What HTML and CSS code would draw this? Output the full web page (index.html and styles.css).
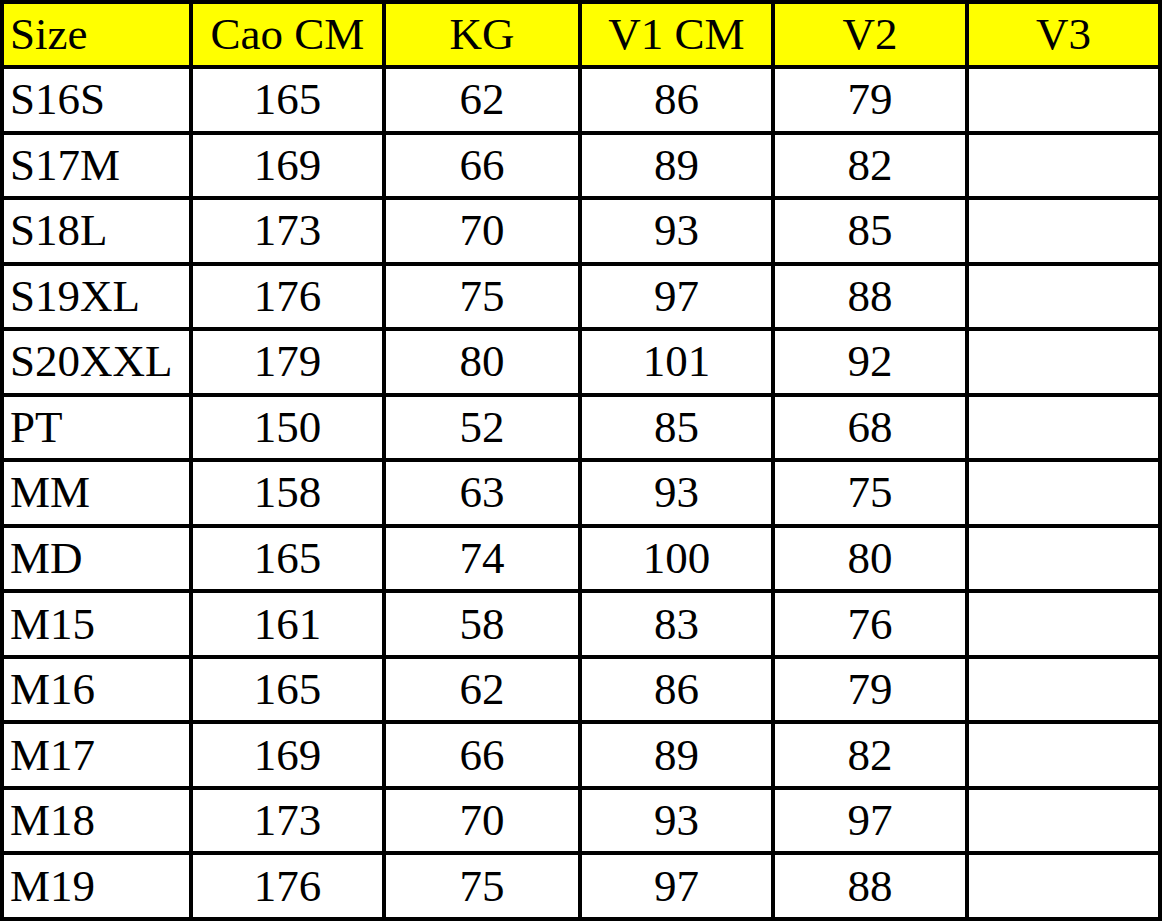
FILE: index.html
```html
<!DOCTYPE html>
<html lang="vi">
<head>
<meta charset="utf-8">
<title>Size</title>
<link rel="stylesheet" href="styles.css">
</head>
<body>
<table class="size-table">
  <colgroup>
    <col class="c1"><col class="c2"><col class="c3"><col class="c4"><col class="c5"><col class="c6">
  </colgroup>
  <thead>
    <tr><th class="name">Size</th><th>Cao CM</th><th>KG</th><th>V1 CM</th><th>V2</th><th>V3</th></tr>
  </thead>
  <tbody>
    <tr><td class="name">S16S</td><td>165</td><td>62</td><td>86</td><td>79</td><td></td></tr>
    <tr><td class="name">S17M</td><td>169</td><td>66</td><td>89</td><td>82</td><td></td></tr>
    <tr><td class="name">S18L</td><td>173</td><td>70</td><td>93</td><td>85</td><td></td></tr>
    <tr><td class="name">S19XL</td><td>176</td><td>75</td><td>97</td><td>88</td><td></td></tr>
    <tr><td class="name">S20XXL</td><td>179</td><td>80</td><td>101</td><td>92</td><td></td></tr>
    <tr><td class="name">PT</td><td>150</td><td>52</td><td>85</td><td>68</td><td></td></tr>
    <tr><td class="name">MM</td><td>158</td><td>63</td><td>93</td><td>75</td><td></td></tr>
    <tr><td class="name">MD</td><td>165</td><td>74</td><td>100</td><td>80</td><td></td></tr>
    <tr><td class="name">M15</td><td>161</td><td>58</td><td>83</td><td>76</td><td></td></tr>
    <tr><td class="name">M16</td><td>165</td><td>62</td><td>86</td><td>79</td><td></td></tr>
    <tr><td class="name">M17</td><td>169</td><td>66</td><td>89</td><td>82</td><td></td></tr>
    <tr><td class="name">M18</td><td>173</td><td>70</td><td>93</td><td>97</td><td></td></tr>
    <tr><td class="name">M19</td><td>176</td><td>75</td><td>97</td><td>88</td><td></td></tr>
  </tbody>
</table>
</body>
</html>
```
FILE: styles.css
```css
html, body {
  margin: 0;
  padding: 0;
  background: #ffffff;
}

.size-table {
  width: 1162px;
  height: 921px;
  table-layout: fixed;
  border-collapse: separate;
  border-spacing: 4px;
  background: #000000;
  font-family: "Liberation Serif", "Times New Roman", serif;
  font-size: 45px;
  color: #000000;
}

.c1 { width: 185px; }
.c2 { width: 189px; }
.c3 { width: 192px; }
.c4 { width: 189px; }
.c5 { width: 190px; }
.c6 { width: 189px; }

.size-table th,
.size-table td {
  padding: 0;
  height: 61px;
  background: #ffffff;
  font-weight: normal;
  text-align: center;
  vertical-align: middle;
  line-height: 1;
  white-space: nowrap;
  overflow: hidden;
}

.size-table th {
  background: #ffff00;
}

.size-table .name {
  text-align: left;
  padding-left: 6px;
}
```
